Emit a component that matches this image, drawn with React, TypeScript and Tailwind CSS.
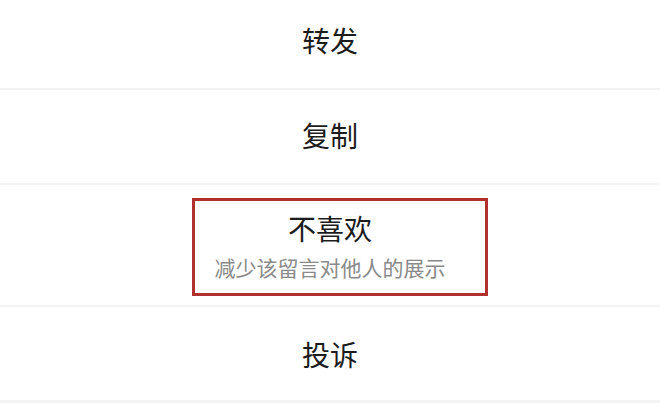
import React from "react";

const font = { fontFamily: '"Noto Sans CJK SC", "Noto Sans", sans-serif' };

export default function App() {
  return (
    <div className="w-[660px] h-[403px] bg-white overflow-hidden flex flex-col" style={font}>
      <div className="h-[88px] flex items-center justify-center pb-[8px] text-[28px] text-[#1c1c1c] leading-none">
        转发
      </div>
      <div className="h-[2px] bg-[#f3f3f3]" />
      <div className="h-[93px] flex items-center justify-center pb-[4px] text-[28px] text-[#1c1c1c] leading-none">
        复制
      </div>
      <div className="h-[2px] bg-[#f3f3f3]" />
      <div className="h-[120px] relative flex flex-col items-center">
        <div className="absolute left-[192px] top-[13px] w-[296px] h-[98px] border-[3px] border-[#b0302e]" />
        <div className="mt-[29px] text-[28px] leading-none text-[#1c1c1c]">不喜欢</div>
        <div className="mt-[15px] text-[21px] leading-none text-[#8a8a8a]">减少该留言对他人的展示</div>
      </div>
      <div className="h-[2px] bg-[#f3f3f3]" />
      <div className="h-[93px] flex items-center justify-center text-[28px] text-[#1c1c1c] leading-none">
        投诉
      </div>
      <div className="h-[3px] bg-[#f3f3f3]" />
    </div>
  );
}
